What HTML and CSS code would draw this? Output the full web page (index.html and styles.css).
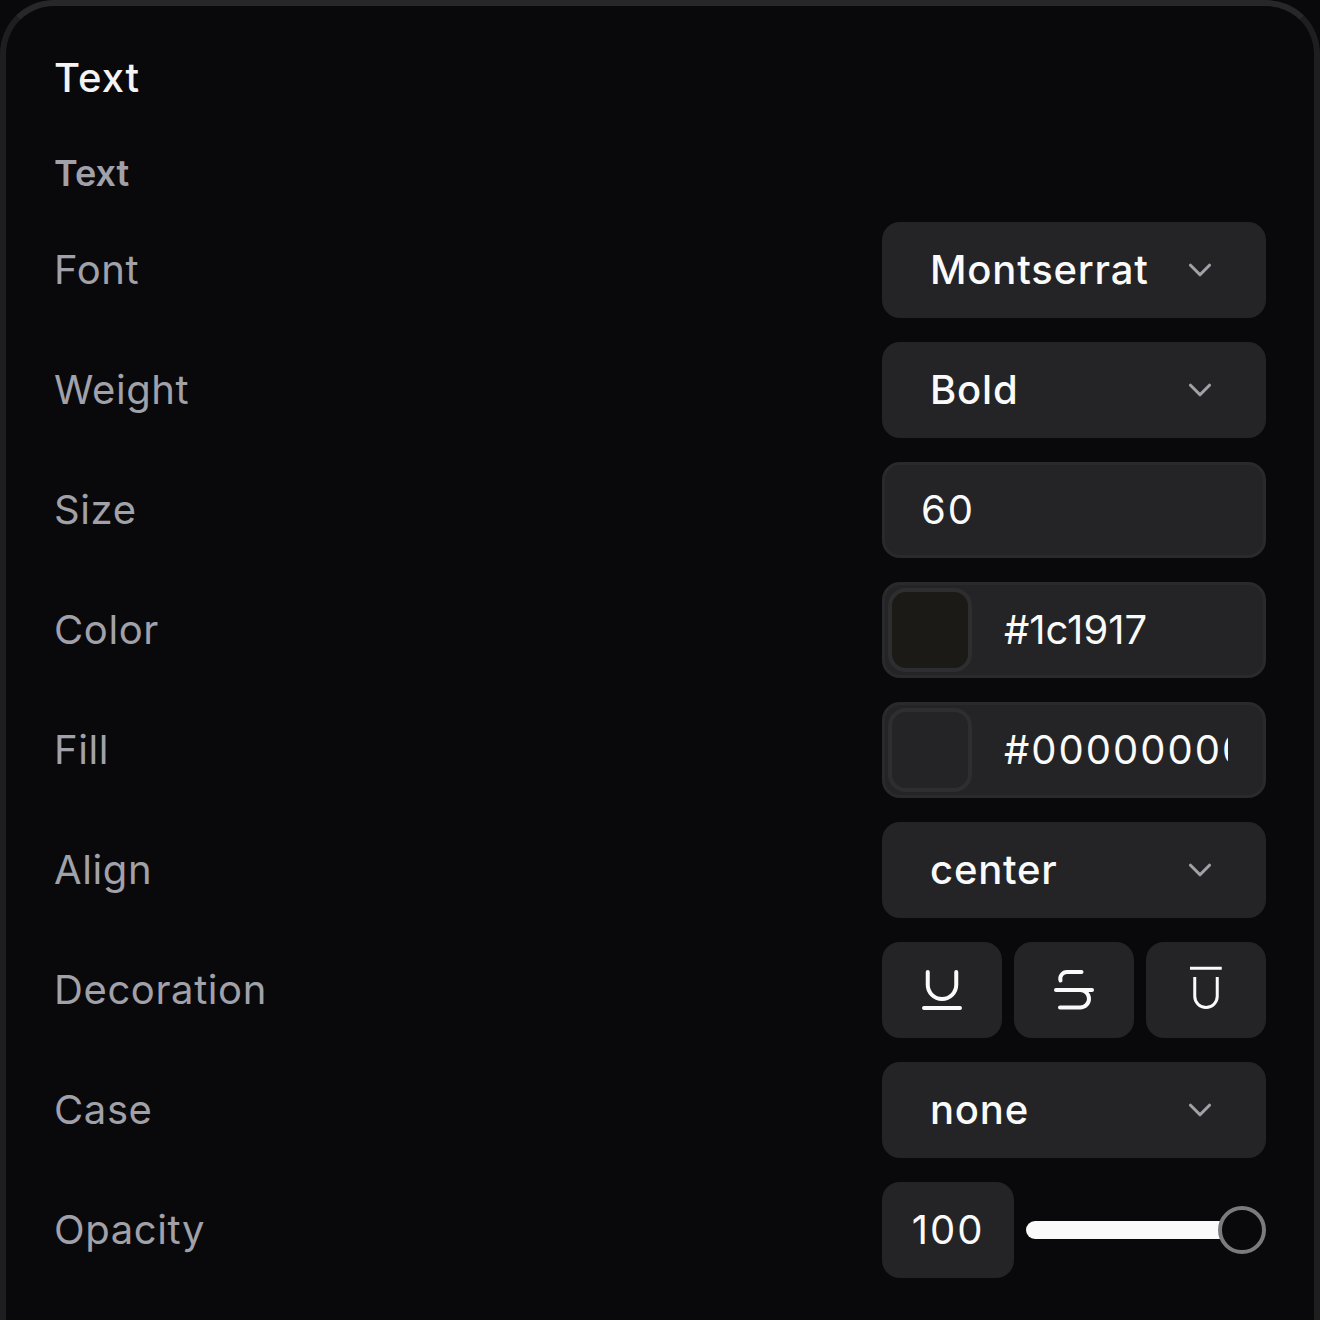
FILE: index.html
```html
<!DOCTYPE html>
<html lang="en">
<head>
  <meta charset="UTF-8" />
  <meta name="viewport" content="width=device-width, initial-scale=1.0"/>
  <title>Text panel</title>
  <link rel="stylesheet" href="styles.css">
</head>
<body>
  <div class="panel">
    <h2 class="panel-title">Text</h2>
    <h3 class="group-title">Text</h3>

    <div class="rows">
      <div class="row">
        <span class="label">Font</span>
        <div class="control select">
          <span class="value">Montserrat</span>
          <svg class="chevron" viewBox="0 0 24 24"><path d="m6 9 6 6 6-6"/></svg>
        </div>
      </div>

      <div class="row">
        <span class="label">Weight</span>
        <div class="control select">
          <span class="value">Bold</span>
          <svg class="chevron" viewBox="0 0 24 24"><path d="m6 9 6 6 6-6"/></svg>
        </div>
      </div>

      <div class="row">
        <span class="label">Size</span>
        <div class="control field"><span class="value number">60</span></div>
      </div>

      <div class="row">
        <span class="label">Color</span>
        <div class="control color">
          <span class="swatch swatch-stone"></span>
          <span class="value color-value">#1c1917</span>
        </div>
      </div>

      <div class="row">
        <span class="label">Fill</span>
        <div class="control color">
          <span class="swatch"></span>
          <span class="value color-value number">#00000000</span>
        </div>
      </div>

      <div class="row">
        <span class="label">Align</span>
        <div class="control select">
          <span class="value">center</span>
          <svg class="chevron" viewBox="0 0 24 24"><path d="m6 9 6 6 6-6"/></svg>
        </div>
      </div>

      <div class="row">
        <span class="label">Decoration</span>
        <div class="decoration">
          <button class="deco-btn">
            <svg class="deco-icon" viewBox="0 0 24 24"><path d="M6.3 4.8v5.1a5.7 5.7 0 0 0 11.4 0V4.8"/><path d="M4.8 19.2h14.4"/></svg>
          </button>
          <button class="deco-btn">
            <svg class="deco-icon" viewBox="0 0 24 24"><path d="M15 4.8H9.2a2.7 2.7 0 0 0-2.6 3.4"/><path d="M14.5 12a3.5 3.5 0 0 1 0 7H6.4"/><path d="M4.8 12h14.4"/></svg>
          </button>
          <button class="deco-btn">
            <svg class="deco-icon thin" viewBox="0 0 24 24"><path d="M7.5 6.8v7.7a4.5 4.5 0 0 0 9 0V6.8"/><path d="M5.6 3.3h12.7"/></svg>
          </button>
        </div>
      </div>

      <div class="row">
        <span class="label">Case</span>
        <div class="control select">
          <span class="value">none</span>
          <svg class="chevron" viewBox="0 0 24 24"><path d="m6 9 6 6 6-6"/></svg>
        </div>
      </div>

      <div class="row">
        <span class="label">Opacity</span>
        <div class="opacity">
          <div class="opacity-value"><span class="value number">100</span></div>
          <div class="slider">
            <div class="slider-track"></div>
            <div class="slider-thumb"></div>
          </div>
        </div>
      </div>
    </div>
  </div>
</body>
</html>
```

FILE: styles.css
```css
* {
  box-sizing: border-box;
}

html, body {
  margin: 0;
  padding: 0;
  background-color: #09090b;
  font-family: Inter, "Liberation Sans", sans-serif;
}

body {
  width: 1320px;
  height: 1320px;
  overflow: hidden;
}

.panel {
  width: 1320px;
  height: 1320px;
  padding: 48px 48px 0;
  background-color: #09090b;
  border: 6px solid #1e1e21;
  border-top-color: #27272a;
  border-bottom: none;
  border-radius: 54px 54px 0 0;
}

.panel-title {
  margin: 0;
  height: 48px;
  line-height: 48px;
  font-size: 40px;
  font-weight: 500;
  letter-spacing: 1px;
  color: #f4f4f5;
}

.group-title {
  margin: 0;
  padding-top: 47px;
  height: 96px;
  line-height: 48px;
  font-size: 36px;
  font-weight: 600;
  color: #a1a1aa;
}

.rows {
  display: flex;
  flex-direction: column;
  gap: 24px;
  padding-top: 24px;
}

.row {
  display: flex;
  align-items: center;
  justify-content: space-between;
  height: 96px;
}

.label {
  margin-top: -2px;
  font-size: 40px;
  letter-spacing: 0.6px;
  color: #a1a1aa;
}

.control {
  display: flex;
  align-items: center;
  width: 384px;
  height: 96px;
  background-color: #242426;
  border-radius: 18px;
  font-size: 40px;
  color: #fafafa;
}

.value {
  margin-top: -2px;
}

.number {
  letter-spacing: 2px;
}

.select {
  justify-content: space-between;
  padding: 0 46px 0 48px;
  font-weight: 500;
  letter-spacing: 0.8px;
}

.chevron {
  width: 38px;
  height: 38px;
  margin-right: 1px;
  fill: none;
  stroke: #a1a1aa;
  stroke-width: 2;
  stroke-linecap: round;
  stroke-linejoin: round;
}

.field {
  padding-left: 36px;
  border: 3px solid #2a2a2d;
}

.color {
  padding: 3px;
  border: 3px solid #2a2a2d;
}

.swatch {
  flex: none;
  width: 84px;
  height: 84px;
  border: 4px solid #2e2e31;
  border-radius: 18px;
}

.swatch-stone {
  background-color: #1b1a16;
}

.color-value {
  width: 224px;
  margin-left: 32px;
  overflow: hidden;
  white-space: nowrap;
}

.decoration {
  display: flex;
  gap: 12px;
}

.deco-btn {
  display: flex;
  align-items: center;
  justify-content: center;
  width: 120px;
  height: 96px;
  padding: 0;
  border: none;
  border-radius: 18px;
  background-color: #242426;
}

.deco-icon {
  width: 60px;
  height: 60px;
  fill: none;
  stroke: #fafafa;
  stroke-width: 1.6;
  stroke-linecap: round;
  stroke-linejoin: round;
}

.deco-icon.thin {
  stroke-width: 1.2;
  stroke-linecap: butt;
}

.opacity {
  display: flex;
  align-items: center;
  gap: 12px;
  width: 384px;
}

.opacity-value {
  display: flex;
  align-items: center;
  justify-content: center;
  width: 132px;
  height: 96px;
  background-color: #242426;
  border-radius: 18px;
  font-size: 40px;
  color: #fafafa;
}

.slider {
  position: relative;
  flex: 1;
  height: 48px;
}

.slider-track {
  position: absolute;
  top: 15px;
  left: 0;
  right: 12px;
  height: 18px;
  background-color: #fafafa;
  border-radius: 9px;
}

.slider-thumb {
  position: absolute;
  top: 0;
  right: 0;
  width: 48px;
  height: 48px;
  background-color: #09090b;
  border: 4px solid #7b7b7f;
  border-radius: 50%;
}
```
